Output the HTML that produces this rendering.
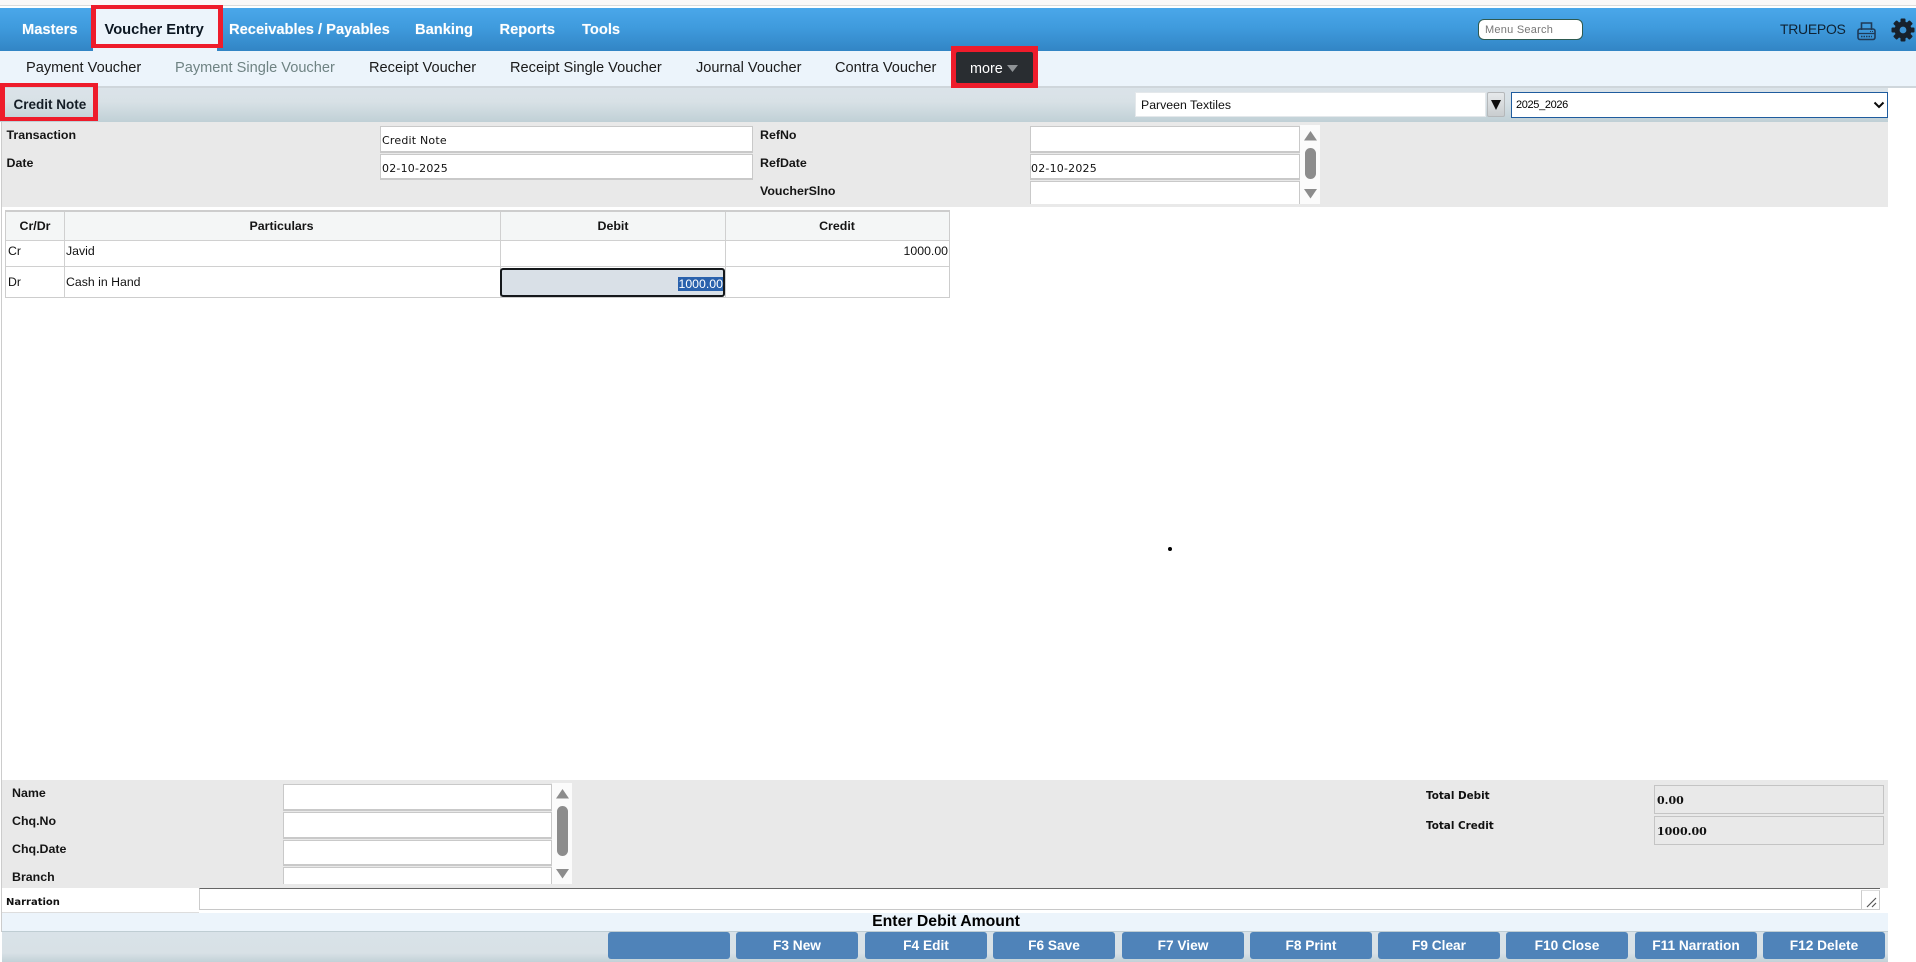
<!DOCTYPE html>
<html><head><meta charset="utf-8"><title>Credit Note</title>
<style>
*{box-sizing:border-box}
html,body{margin:0;padding:0;width:1916px;height:962px;overflow:hidden;background:#fff;font-family:"Liberation Sans",Arial,sans-serif;color:#111}
.a{position:absolute}
.t{position:absolute;white-space:nowrap;line-height:16px;height:16px}
.nav{font-weight:bold;font-size:14.7px;color:#fff;top:22px;text-shadow:0 0 1px rgba(255,255,255,.4)}
.sub{font-size:14.6px;top:60px;color:#1a1a1a}
.lb{font-weight:bold;font-size:12.4px;color:#151515}
.in{position:absolute;background:#fff;border:2px solid #c9c9c9;border-width:1px 1px 2px 1px}
.dv{font-family:"DejaVu Sans",sans-serif;font-size:11px;color:#111;letter-spacing:.2px}
.btn{position:absolute;top:932px;height:27px;width:122px;background:#4f83b9;border-radius:3px;color:#fff;font-weight:bold;font-size:13.7px;text-align:center;line-height:28px}
.sb{position:absolute;background:#fbfbfb}
.cm{font-family:"DejaVu Sans",sans-serif;font-weight:bold;font-size:10.4px;color:#111}
.r{font-size:12.3px}
</style></head><body>

<div class="a" style="left:0;top:0;width:1916px;height:5px;background:#fbf8f8"></div>
<div class="a" style="left:0;top:5px;width:1916px;height:1px;background:#dcdcdc"></div>
<div class="a" style="left:0;top:8px;width:1916px;height:43px;background:linear-gradient(#4aa7ea,#3f9bdd 45%,#3285c5)"></div>
<div class="a" style="left:0;top:51px;width:1916px;height:35px;background:#ecf4fb"></div>
<div class="a" style="left:0;top:86px;width:1916px;height:2px;background:#cfd6db"></div>

<div class="a" style="left:91px;top:5px;width:132px;height:43px;background:#ecf4fb;border:5px solid #ee1c2b;border-width:4px 5px"></div>
<div class="a" style="left:93px;top:48px;width:124px;height:3px;background:#ecf4fb"></div>
<div class="t nav" style="left:22px">Masters</div>
<div class="t nav" style="left:104.500px;color:#0c1722;text-shadow:none">Voucher Entry</div>
<div class="t nav" style="left:229px">Receivables / Payables</div>
<div class="t nav" style="left:415px">Banking</div>
<div class="t nav" style="left:499.500px">Reports</div>
<div class="t nav" style="left:582px">Tools</div>

<div class="a" style="left:1478px;top:19px;width:105px;height:21px;background:#fff;border:1px solid #2e5a50;border-radius:6px"></div>
<div class="t" style="left:1485px;top:22px;font-size:11px;color:#777;letter-spacing:.25px">Menu Search</div>
<div class="t" style="left:1780px;top:21px;font-size:14px;color:#0f2233;letter-spacing:-.3px">TRUEPOS</div>
<svg class="a" style="left:1857px;top:21px" width="19" height="20" viewBox="0 0 19 20"><path d="M4.500 9V2h10v7" fill="none" stroke="#1f3a57" stroke-width="1.6"/><rect x="1" y="8" width="17" height="10.500" rx="2" fill="none" stroke="#1f3a57" stroke-width="1.6"/><path d="M1 12.500h17" stroke="#1f3a57" stroke-width="1.2"/><path d="M4 15.500h11" stroke="#1f3a57" stroke-width="1.4" stroke-dasharray="1.5 1"/><path d="M13 10.500h3" stroke="#1f3a57" stroke-width="1" stroke-dasharray="1 1"/></svg>
<svg class="a" style="left:1891px;top:18px" width="24" height="24" viewBox="-12 -12 24 24"><g fill="#17212c"><circle r="8.500"/><rect x="-2.500" y="-11.500" width="5" height="23" rx="1"/><rect x="-2.500" y="-11.500" width="5" height="23" rx="1" transform="rotate(45)"/><rect x="-2.500" y="-11.500" width="5" height="23" rx="1" transform="rotate(90)"/><rect x="-2.500" y="-11.500" width="5" height="23" rx="1" transform="rotate(135)"/></g><circle r="3.400" fill="#3b92d3"/></svg>

<div class="t sub" style="left:26px">Payment Voucher</div>
<div class="t sub" style="left:175px;color:#6f8383">Payment Single Voucher</div>
<div class="t sub" style="left:369px">Receipt Voucher</div>
<div class="t sub" style="left:510px">Receipt Single Voucher</div>
<div class="t sub" style="left:696px">Journal Voucher</div>
<div class="t sub" style="left:835px">Contra Voucher</div>
<div class="a" style="left:951px;top:46px;width:87px;height:42px;background:#ee1c2b"></div>
<div class="a" style="left:956px;top:52px;width:77px;height:31px;background:#292d31;border-radius:2px"></div>
<div class="t" style="left:970px;top:61px;font-size:14.4px;color:#fff">more</div>
<svg class="a" style="left:1007px;top:64px" width="11" height="9"><path d="M0 1h11l-5.500 7z" fill="#8f9396"/></svg>

<div class="a" style="left:0;top:88px;width:1888px;height:34px;background:linear-gradient(#dbe3e9,#d8e1e6 40%,#c0d0d6)"></div>
<div class="a" style="left:0;top:83px;width:98px;height:38px;border:5px solid #ee1c2b;border-width:4px 5px"></div>
<div class="t" style="left:13.500px;top:97px;font-weight:bold;font-size:13.5px;color:#141d26">Credit Note</div>
<div class="a" style="left:1135px;top:92px;width:351px;height:25px;background:#fff;border:1px solid #e4e8eb"></div>
<div class="t" style="left:1141px;top:97px;font-size:12.3px;color:#111">Parveen Textiles</div>
<div class="a" style="left:1487px;top:92px;width:18px;height:25px;background:linear-gradient(#e6e9eb,#c9cdcf);border:1px solid #b5b8ba;border-radius:2px"></div>
<svg class="a" style="left:1491px;top:100px" width="10" height="10"><path d="M0 0h10l-5 10z" fill="#0c0c0c"/></svg>
<div class="a" style="left:1511px;top:92px;width:377px;height:26px;background:#fff;border:1px solid #1f5c9e"></div>
<div class="t" style="left:1516px;top:97px;font-size:11px;color:#000;letter-spacing:-.35px">2025_2026</div>
<svg class="a" style="left:1873px;top:101px" width="12" height="9"><path d="M1.500 1.500l4.500 4.500l4.500-4.500" fill="none" stroke="#0a0a0a" stroke-width="2"/></svg>

<div class="a" style="left:2px;top:122px;width:1886px;height:85px;background:#e9e9e9"></div>
<div class="a" style="left:1px;top:122px;width:1px;height:810px;background:#ccc"></div>
<div class="t lb" style="left:6.500px;top:127px">Transaction</div>
<div class="t lb" style="left:6.500px;top:155px">Date</div>
<div class="in" style="left:380px;top:126px;width:373px;height:27px"></div>
<div class="in" style="left:380px;top:154px;width:373px;height:26px"></div>
<div class="t dv" style="left:382px;top:133px">Credit Note</div>
<div class="t dv" style="left:382px;top:161px">02-10-2025</div>
<div class="t lb" style="left:760px;top:127px">RefNo</div>
<div class="t lb" style="left:760px;top:155px">RefDate</div>
<div class="t lb" style="left:760px;top:183px">VoucherSlno</div>
<div class="in" style="left:1030px;top:126px;width:270px;height:27px"></div>
<div class="in" style="left:1030px;top:154px;width:270px;height:26px"></div>
<div class="in" style="left:1030px;top:181px;width:270px;height:23px;border-bottom:0"></div>
<div class="t dv" style="left:1031px;top:161px">02-10-2025</div>
<div class="sb" style="left:1300px;top:125px;width:20px;height:79px"></div>
<svg class="a" style="left:1304px;top:131px" width="13" height="10"><path d="M6.500 0L13 9.500H0z" fill="#8c8c8c"/></svg>
<div class="a" style="left:1305px;top:148px;width:11px;height:31px;background:#8c8c8c;border-radius:6px"></div>
<svg class="a" style="left:1304px;top:189px" width="13" height="10"><path d="M0 0H13L6.500 9.500z" fill="#8c8c8c"/></svg>

<!-- table -->
<div class="a" style="left:5px;top:210px;width:945px;height:88px;background:#fff;border:1px solid #cdcdcd;border-top-width:2px"></div>
<div class="a" style="left:6px;top:212px;width:943px;height:28px;background:#f4f6f6"></div>
<div class="a" style="left:6px;top:240px;width:943px;height:1px;background:#d0d0d0"></div>
<div class="a" style="left:6px;top:266px;width:943px;height:1px;background:#d0d0d0"></div>
<div class="a" style="left:64px;top:212px;width:1px;height:86px;background:#d0d0d0"></div>
<div class="a" style="left:500px;top:212px;width:1px;height:86px;background:#d0d0d0"></div>
<div class="a" style="left:725px;top:212px;width:1px;height:86px;background:#d0d0d0"></div>
<div class="t lb" style="left:6px;width:58px;text-align:center;top:218px">Cr/Dr</div>
<div class="t lb" style="left:64px;width:435px;text-align:center;top:218px">Particulars</div>
<div class="t lb" style="left:501px;width:224px;text-align:center;top:218px">Debit</div>
<div class="t lb" style="left:726px;width:222px;text-align:center;top:218px">Credit</div>
<div class="t r" style="left:8px;top:243px">Cr</div>
<div class="t r" style="left:66px;top:243px">Javid</div>
<div class="t r" style="right:968px;top:243px">1000.00</div>
<div class="t r" style="left:8px;top:274px">Dr</div>
<div class="t r" style="left:66px;top:274px">Cash in Hand</div>
<div class="a" style="left:500px;top:268px;width:225px;height:29px;background:#d9e0e7;border:2px solid #15181b;border-radius:3px"></div>
<div class="a" style="left:678px;top:277px;width:45px;height:14px;background:#2a62ad"></div>
<div class="t" style="left:678.500px;top:276px;font-size:12.3px;color:#fff">1000.00</div>

<div class="a" style="left:1167.500px;top:547px;width:4px;height:4px;border-radius:50%;background:#000"></div>

<!-- bottom panel -->
<div class="a" style="left:2px;top:780px;width:1886px;height:108px;background:#e9e9e9"></div>
<div class="t lb" style="left:12px;top:785px">Name</div>
<div class="t lb" style="left:12px;top:813px">Chq.No</div>
<div class="t lb" style="left:12px;top:841px">Chq.Date</div>
<div class="t lb" style="left:12px;top:869px">Branch</div>
<div class="in" style="left:283px;top:784px;width:269px;height:27px"></div>
<div class="in" style="left:283px;top:812px;width:269px;height:27px"></div>
<div class="in" style="left:283px;top:840px;width:269px;height:26px"></div>
<div class="in" style="left:283px;top:867px;width:269px;height:17px;border-bottom:0"></div>
<div class="sb" style="left:552px;top:783px;width:20px;height:101px"></div>
<svg class="a" style="left:556px;top:789px" width="13" height="10"><path d="M6.500 0L13 9.500H0z" fill="#8c8c8c"/></svg>
<div class="a" style="left:557px;top:806px;width:11px;height:50px;background:#8c8c8c;border-radius:6px"></div>
<svg class="a" style="left:556px;top:869px" width="13" height="10"><path d="M0 0H13L6.500 9.500z" fill="#8c8c8c"/></svg>
<div class="t cm" style="left:1426px;top:787.500px">Total Debit</div>
<div class="t cm" style="left:1426px;top:818px">Total Credit</div>
<div class="a" style="left:1654px;top:785px;width:230px;height:29px;border:1px solid #c4c4c4"></div>
<div class="a" style="left:1654px;top:816px;width:230px;height:29px;border:1px solid #c4c4c4"></div>
<div class="t" style="left:1657px;top:793px;font-family:'DejaVu Serif',serif;font-weight:bold;font-size:11px">0.00</div>
<div class="t" style="left:1657px;top:824px;font-family:'DejaVu Serif',serif;font-weight:bold;font-size:11px">1000.00</div>

<!-- narration -->
<div class="a" style="left:2px;top:888px;width:197px;height:25px;background:#fff;border-bottom:1px solid #ddd"></div>
<div class="t cm" style="left:6px;top:894.500px;font-size:10px">Narration</div>
<div class="a" style="left:199px;top:888px;width:1681px;height:22px;background:#fff;border-top:1px solid #666;border-bottom:1px solid #c8c8c8;border-left:1px solid #ccc"></div>
<div class="a" style="left:1861px;top:890px;width:19px;height:20px;background:#fff;border:1px solid #ccc;border-top:1px solid #ddd"></div>
<svg class="a" style="left:1866px;top:897px" width="12" height="11"><path d="M1 10L10 1M6 10L10 6" stroke="#555" stroke-width="1.200"/></svg>

<div class="a" style="left:2px;top:913px;width:1886px;height:18px;background:#ecf4fb"></div>
<div class="t" style="left:3px;width:1886px;text-align:center;top:913px;font-weight:bold;font-size:15.8px;color:#000;line-height:18px;height:18px">Enter Debit Amount</div>

<div class="a" style="left:2px;top:931px;width:1886px;height:31px;background:linear-gradient(#d9e2e8,#d8e1e6 70%,#c2d1d7);border-top:1px solid #bfcdd3"></div>
<div class="btn" style="left:608px"></div>
<div class="btn" style="left:736px">F3 New</div>
<div class="btn" style="left:865px">F4 Edit</div>
<div class="btn" style="left:993px">F6 Save</div>
<div class="btn" style="left:1122px">F7 View</div>
<div class="btn" style="left:1250px">F8 Print</div>
<div class="btn" style="left:1378px">F9 Clear</div>
<div class="btn" style="left:1506px">F10 Close</div>
<div class="btn" style="left:1635px">F11 Narration</div>
<div class="btn" style="left:1763px">F12 Delete</div>
</body></html>
